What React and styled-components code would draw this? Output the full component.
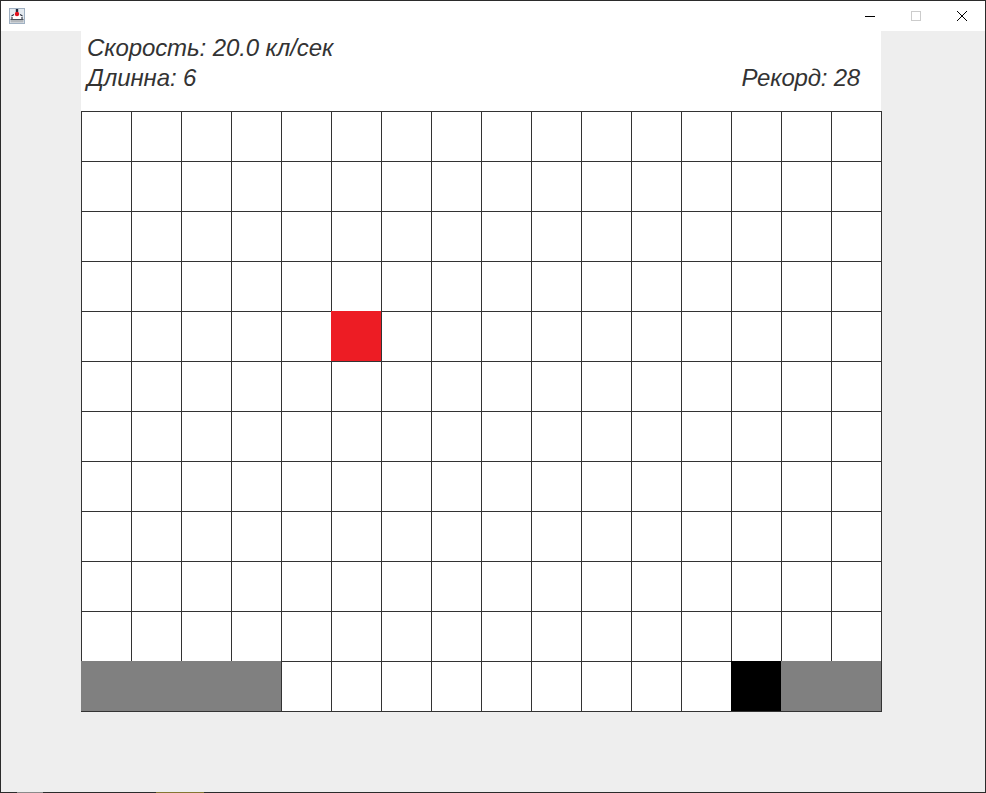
import React from 'react'
import styled, { createGlobalStyle } from 'styled-components'

const COLS = 16
const ROWS = 12

// row 11 holds the snake, row 4 the apple
const filled = {
  '4-5': '#ed1c24',
  '11-0': '#808080',
  '11-1': '#808080',
  '11-2': '#808080',
  '11-3': '#808080',
  '11-13': '#000000',
  '11-14': '#808080',
  '11-15': '#808080',
}

const GlobalStyle = createGlobalStyle`
  html, body {
    margin: 0;
    padding: 0;
    background: #eeeeee;
  }
`

const Window = styled.div`
  position: relative;
  box-sizing: border-box;
  width: 986px;
  height: 793px;
  border: 1px solid #2b2b2b;
  background: #eeeeee;
  font-family: "Liberation Sans", Arial, sans-serif;
`

const TitleBar = styled.div`
  display: flex;
  align-items: center;
  justify-content: space-between;
  height: 30px;
  background: #ffffff;
`

const AppIcon = styled.svg`
  display: block;
  width: 16px;
  height: 16px;
  margin-left: 8px;
`

const Controls = styled.div`
  display: flex;
`

const ControlButton = styled.div`
  display: flex;
  align-items: center;
  justify-content: center;
  width: 46px;
  height: 30px;
`

const ControlIcon = styled.svg`
  display: block;
  width: 10px;
  height: 10px;
`

const Content = styled.div`
  width: 801px;
  margin-left: 80px;
`

const Header = styled.div`
  box-sizing: border-box;
  width: 800px;
  height: 80px;
  padding: 2px 21px 0 6px;
  background: #ffffff;
  color: #333333;
  font-size: 24px;
  font-style: italic;
  line-height: 30px;
  letter-spacing: -0.1px;
`

const StatsLine = styled.div`
  display: flex;
  justify-content: space-between;
`

const Record = styled.span`
  letter-spacing: -0.2px;
`

const Board = styled.div`
  display: grid;
  grid-template-columns: repeat(${COLS}, 50px);
  grid-auto-rows: 50px;
  width: 801px;
  height: 601px;
  box-sizing: border-box;
  border-right: 1px solid #333333;
  border-bottom: 1px solid #333333;
  background: #ffffff;
`

const Cell = styled.div`
  box-sizing: border-box;
  background: ${(p) => p.$fill || '#ffffff'};
  border-left: ${(p) => (p.$fill ? 'none' : '1px solid #333333')};
  border-top: ${(p) => (p.$fill ? 'none' : '1px solid #333333')};
`

// bits of the taskbar showing through the window's bottom edge
const EdgeTint = styled.div`
  position: absolute;
  bottom: -1px;
  left: ${(p) => p.$left}px;
  width: ${(p) => p.$width}px;
  height: 1px;
  background: ${(p) => p.$color};
`

export default function App() {
  const cells = []
  for (let r = 0; r < ROWS; r++) {
    for (let c = 0; c < COLS; c++) {
      cells.push(<Cell key={r + '-' + c} $fill={filled[r + '-' + c]} />)
    }
  }

  return (
    <Window>
      <GlobalStyle />
      <TitleBar>
        <AppIcon viewBox="0 0 16 16">
          <rect x="0.5" y="0.5" width="15" height="15" fill="#e4eaf0" stroke="#9fb0c2" />
          <path d="M3 8 L6 6 L10 6 L13 8 L13 11 L3 11 Z" fill="#ffffff" />
          <path d="M1.5 12 H14.5 V14.5 H1.5 Z" fill="#b4b8bc" />
          <path d="M1.5 11.5 H14.5" stroke="#4a4f58" strokeWidth="1" />
          <path d="M8 1 L8 4" stroke="#20283c" strokeWidth="2.4" />
          <path d="M2.5 8 L5 6.5 M13.5 8 L11 6.5 M3 9 L3 11 M13 9 L13 11" stroke="#2a3040" strokeWidth="1.1" />
          <circle cx="8" cy="6" r="2.2" fill="#e3101c" />
        </AppIcon>
        <Controls>
          <ControlButton>
            <ControlIcon viewBox="0 0 10 10">
              <path d="M0 5.5 H10" stroke="#000000" strokeWidth="1" />
            </ControlIcon>
          </ControlButton>
          <ControlButton>
            <ControlIcon viewBox="0 0 10 10">
              <rect x="0.5" y="0.5" width="9" height="9" fill="none" stroke="#cccccc" strokeWidth="1" />
            </ControlIcon>
          </ControlButton>
          <ControlButton>
            <ControlIcon viewBox="0 0 10 10">
              <path d="M0 0 L10 10 M10 0 L0 10" stroke="#000000" strokeWidth="1" />
            </ControlIcon>
          </ControlButton>
        </Controls>
      </TitleBar>
      <Content>
        <Header>
          <div>Скорость: 20.0 кл/сек</div>
          <StatsLine>
            <span>Длинна: 6</span>
            <Record>Рекорд: 28</Record>
          </StatsLine>
        </Header>
        <Board>{cells}</Board>
      </Content>
      <EdgeTint $left={16} $width={26} $color="#8a8a8a" />
      <EdgeTint $left={155} $width={48} $color="#857632" />
    </Window>
  )
}
